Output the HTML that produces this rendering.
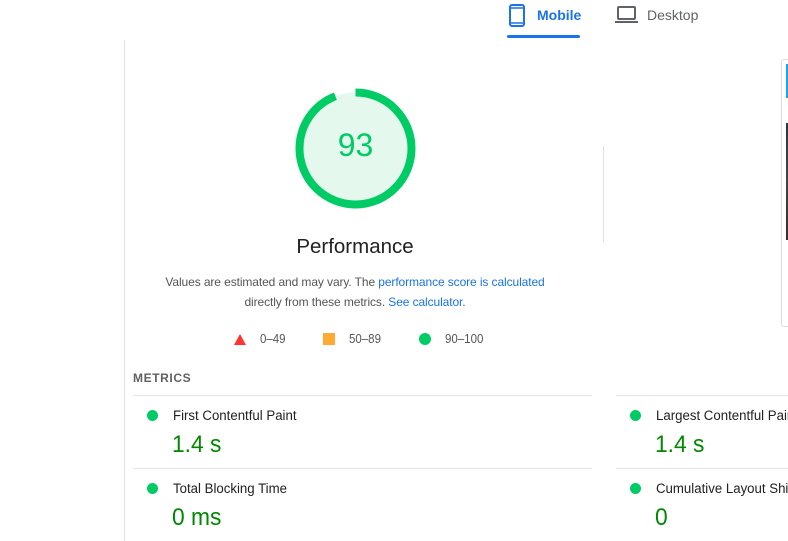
<!DOCTYPE html>
<html><head><meta charset="utf-8"><style>
*{margin:0;padding:0;box-sizing:border-box}
body{width:788px;height:541px;overflow:hidden;background:#fff;font-family:"Liberation Sans",sans-serif;position:relative;color:#212121}
.a{position:absolute;white-space:nowrap}
.sm{font-size:12.5px;color:#555;transform:scaleX(.92);transform-origin:left}
.lbl{font-size:13.5px;color:#212121;transform:scaleX(.98);transform-origin:left}
.val{font-size:24px;color:#080;transform:scaleX(.95);transform-origin:left}
.dot{width:11px;height:11px;border-radius:50%;background:#0c6}
.hl{height:1px;background:#e6e6e6}
a{color:#1a73e8;text-decoration:none}
</style></head><body>
<svg class="a" style="left:509px;top:4px" width="16" height="23" viewBox="0 0 16 23"><rect x="1" y="1" width="14" height="21" rx="2" fill="none" stroke="#1a73e8" stroke-width="2"/><line x1="2" y1="4" x2="14" y2="4" stroke="#1a73e8" stroke-width="1.5"/><line x1="2" y1="19" x2="14" y2="19" stroke="#1a73e8" stroke-width="1.5"/></svg>
<div class="a" style="left:537px;top:7px;font-size:14px;font-weight:bold;color:#1a73e8">Mobile</div>
<div class="a" style="left:507px;top:35px;width:73px;height:3px;background:#1a73e8;border-radius:2px"></div>
<svg class="a" style="left:615px;top:6px" width="23" height="18" viewBox="0 0 23 18"><rect x="3" y="1" width="17" height="12" rx="1" fill="none" stroke="#5f6368" stroke-width="2"/><rect x="0" y="15" width="23" height="2" fill="#5f6368"/></svg>
<div class="a" style="left:647px;top:7px;font-size:14px;color:#5f6368">Desktop</div>
<div class="a" style="left:124px;top:40px;width:1px;height:501px;background:#e0e0e0"></div>
<div class="a" style="left:603px;top:146px;width:1px;height:96px;background:#e0e0e0"></div>
<div class="a" style="left:781px;top:59px;width:20px;height:268px;border:1px solid #ddd;border-radius:3px"></div>
<div class="a" style="left:786px;top:64px;width:2px;height:34px;background:#1aa3e8"></div>
<div class="a" style="left:786px;top:123px;width:2px;height:117px;background:linear-gradient(#2a3440,#444 50%,#3a2a2a)"></div>
<svg class="a" style="left:295px;top:88px" width="121" height="121" viewBox="0 0 121 121">
<circle cx="60.5" cy="60.5" r="56" fill="#e5f8ee"/>
<circle cx="60.5" cy="60.5" r="56" fill="none" stroke="#0c6" stroke-width="8" stroke-dasharray="331 351.9" transform="rotate(-90 60.5 60.5)"/>
</svg>
<div class="a" style="left:295px;top:127px;width:121px;text-align:center;font-size:32px;color:#0c6">93</div>
<div class="a" style="left:255px;top:235px;width:200px;text-align:center;font-size:20.5px;color:#212121">Performance</div>
<div class="a" style="left:135px;top:272px;width:440px;text-align:center;font-size:12px;color:#555;line-height:20px;white-space:normal;letter-spacing:-.1px">Values are estimated and may vary. The <a>performance score is calculated</a><br>directly from these metrics. <a>See calculator</a>.</div>
<div class="a" style="left:234px;top:334px;width:0;height:0;border-left:6px solid transparent;border-right:6px solid transparent;border-bottom:11px solid #f33"></div>
<div class="a sm" style="left:260px;top:332px">0–49</div>
<div class="a" style="left:323px;top:333px;width:12px;height:12px;background:#fa3"></div>
<div class="a sm" style="left:349px;top:332px">50–89</div>
<div class="a dot" style="left:419px;top:333px;width:12px;height:12px"></div>
<div class="a sm" style="left:445px;top:332px">90–100</div>
<div class="a" style="left:133px;top:371px;font-size:12px;font-weight:bold;color:#616161;letter-spacing:.6px">METRICS</div>
<div class="a hl" style="left:133px;top:395px;width:459px"></div>
<div class="a hl" style="left:616px;top:395px;width:172px"></div>
<div class="a hl" style="left:133px;top:468px;width:459px"></div>
<div class="a hl" style="left:616px;top:468px;width:172px"></div>
<div class="a dot" style="left:147px;top:410px"></div>
<div class="a lbl" style="left:173px;top:408px">First Contentful Paint</div>
<div class="a val" style="left:172px;top:431px">1.4 s</div>
<div class="a dot" style="left:147px;top:483px"></div>
<div class="a lbl" style="left:173px;top:481px">Total Blocking Time</div>
<div class="a val" style="left:172px;top:504px">0 ms</div>
<div class="a dot" style="left:630px;top:410px"></div>
<div class="a lbl" style="left:656px;top:408px">Largest Contentful Paint</div>
<div class="a val" style="left:655px;top:431px">1.4 s</div>
<div class="a dot" style="left:630px;top:483px"></div>
<div class="a lbl" style="left:656px;top:481px">Cumulative Layout Shift</div>
<div class="a val" style="left:655px;top:504px">0</div>
</body></html>
